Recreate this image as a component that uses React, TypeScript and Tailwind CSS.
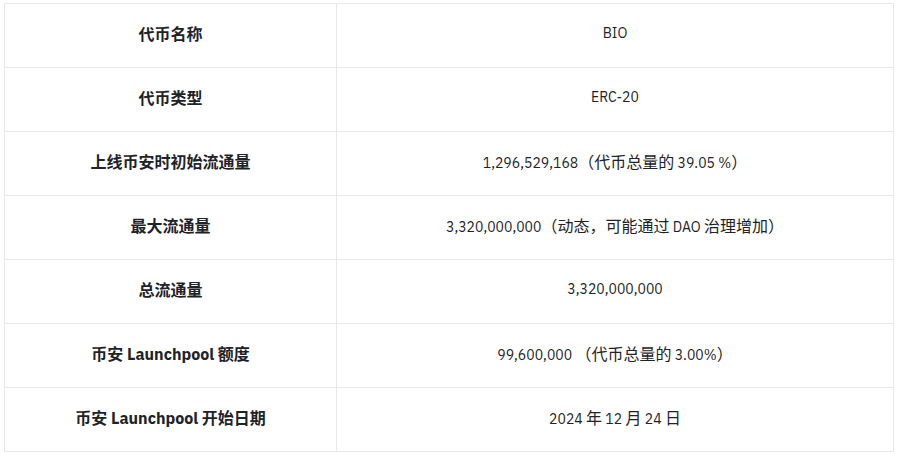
import React from "react";

const rows: [string, string][] = [
  ["代币名称", "BIO"],
  ["代币类型", "ERC-20"],
  ["上线币安时初始流通量", "1,296,529,168（代币总量的 39.05 %）"],
  ["最大流通量", "3,320,000,000（动态，可能通过 DAO 治理增加）"],
  ["总流通量", "3,320,000,000"],
  ["币安 Launchpool 额度", "99,600,000 （代币总量的 3.00%）"],
  ["币安 Launchpool 开始日期", "2024 年 12 月 24 日"],
];

function Value({ text }: { text: string }) {
  const parts = text.split(/([\u3000-\u303f\u4e00-\u9fff\uff00-\uffef]+)/).filter(Boolean);
  return (
    <>
      {parts.map((p, i) =>
        /[\u3000-\u303f\u4e00-\u9fff\uff00-\uffef]/.test(p) ? (
          <span key={i} className="text-[16px]">
            {p}
          </span>
        ) : (
          <span key={i}>{p}</span>
        )
      )}
    </>
  );
}

export default function App() {
  return (
    <div
      className="w-[897px] h-[454px] bg-white pl-[4px] pt-[3px]"
      style={{ fontFamily: '"IBM Plex Sans", Inter, "Noto Sans CJK SC", sans-serif' }}
    >
      <table className="w-[890px] border-collapse table-fixed">
        <tbody>
          {rows.map(([k, v]) => (
            <tr key={k} className="h-[64px]">
              <td className="w-[332px] border border-[#e6e8ea] text-center text-[16px] font-bold text-[#1e2329] p-0 pb-[4px]">
                {k}
              </td>
              <td className="border border-[#e6e8ea] text-center text-[14px] text-[#1e2329] p-0 pb-[4px]">
                <Value text={v} />
              </td>
            </tr>
          ))}
        </tbody>
      </table>
    </div>
  );
}
